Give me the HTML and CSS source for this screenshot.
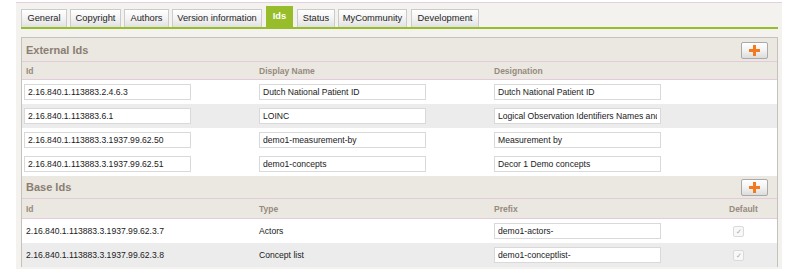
FILE: index.html
```html
<!DOCTYPE html>
<html>
<head>
<meta charset="utf-8">
<link rel="stylesheet" href="styles.css">
</head>
<body>
<div class="page">
  <div class="tabs">
    <div class="tab t-general">General</div>
    <div class="tab t-copy">Copyright</div>
    <div class="tab t-authors">Authors</div>
    <div class="tab t-version">Version information</div>
    <div class="tab active t-ids">Ids</div>
    <div class="tab t-status">Status</div>
    <div class="tab t-comm">MyCommunity</div>
    <div class="tab t-dev">Development</div>
  </div>
  <div class="panel">
    <div class="section-head">
      <span class="section-title">External Ids</span>
      <button class="add-btn"><span class="plus"></span></button>
    </div>
    <div class="row colhead">
      <div class="cell first">Id</div>
      <div class="cell">Display Name</div>
      <div class="cell">Designation</div>
      <div class="cell"></div>
    </div>
    <div class="row">
      <div class="cell first"><input class="field" value="2.16.840.1.113883.2.4.6.3"></div>
      <div class="cell"><input class="field" value="Dutch National Patient ID"></div>
      <div class="cell"><input class="field" value="Dutch National Patient ID"></div>
      <div class="cell"></div>
    </div>
    <div class="row alt">
      <div class="cell first"><input class="field" value="2.16.840.1.113883.6.1"></div>
      <div class="cell"><input class="field" value="LOINC"></div>
      <div class="cell"><input class="field" value="Logical Observation Identifiers Names and Codes"></div>
      <div class="cell"></div>
    </div>
    <div class="row">
      <div class="cell first"><input class="field" value="2.16.840.1.113883.3.1937.99.62.50"></div>
      <div class="cell"><input class="field" value="demo1-measurement-by"></div>
      <div class="cell"><input class="field" value="Measurement by"></div>
      <div class="cell"></div>
    </div>
    <div class="row">
      <div class="cell first"><input class="field" value="2.16.840.1.113883.3.1937.99.62.51"></div>
      <div class="cell"><input class="field" value="demo1-concepts"></div>
      <div class="cell"><input class="field" value="Decor 1 Demo concepts"></div>
      <div class="cell"></div>
    </div>
    <div class="section-head base">
      <span class="section-title">Base Ids</span>
      <button class="add-btn"><span class="plus"></span></button>
    </div>
    <div class="row colhead tall">
      <div class="cell first">Id</div>
      <div class="cell">Type</div>
      <div class="cell">Prefix</div>
      <div class="cell">Default</div>
    </div>
    <div class="row">
      <div class="cell first text">2.16.840.1.113883.3.1937.99.62.3.7</div>
      <div class="cell text">Actors</div>
      <div class="cell"><input class="field" value="demo1-actors-"></div>
      <div class="cell"><span class="check">&#10003;</span></div>
    </div>
    <div class="row alt">
      <div class="cell first text">2.16.840.1.113883.3.1937.99.62.3.8</div>
      <div class="cell text">Concept list</div>
      <div class="cell"><input class="field" value="demo1-conceptlist-"></div>
      <div class="cell"><span class="check">&#10003;</span></div>
    </div>
  </div>
</div>
</body>
</html>
```
FILE: styles.css
```css
html, body {
  margin: 0;
  padding: 0;
  background: #ffffff;
  height: 100%;
  overflow: hidden;
}
body {
  font-family: "Liberation Sans", Arial, sans-serif;
  color: #1a1a1a;
}
.page {
  margin: 2px 0 0 16px;
  width: 766px;
  height: 300px;
  background: #f4f2ee;
  border-top: 1px solid #e6cfe0;
  padding: 4px 0 0 5px;
  box-sizing: border-box;
}
.tabs {
  display: flex;
  align-items: flex-end;
  gap: 3px;
  width: 757px;
  height: 20px;
  border-bottom: 2px solid #98bd2b;
}
.tab {
  height: 18px;
  box-sizing: border-box;
  border: 1px solid #cbcbcb;
  border-bottom: none;
  background: linear-gradient(#ffffff, #f3f3f3 50%, #e1e1e1);
  font-size: 9.3px;
  line-height: 17px;
  text-align: center;
  color: #1e1e1e;
}
.t-general { width: 46px; }
.t-copy { width: 51px; }
.t-authors { width: 45px; }
.t-version { width: 90px; }
.t-ids { width: 27px; margin-left: 1px; }
.t-status { width: 38px; margin-left: 1px; }
.t-comm { width: 69px; }
.t-dev { width: 68px; margin-left: 1px; }
.tab.active {
  height: 21px;
  background: #98bd2b;
  border-color: #98bd2b;
  color: #ffffff;
  font-weight: bold;
  line-height: 18px;
}
.panel {
  margin-top: 8px;
  width: 757px;
  border: 1px solid #c6c2bb;
  border-bottom: none;
  background: #ffffff;
  box-sizing: border-box;
}
.section-head {
  display: flex;
  align-items: center;
  justify-content: space-between;
  height: 23px;
  padding: 0 9px 0 4px;
  background: #ebe7e1;
  border-bottom: 1px solid #e3cbdb;
}
.section-head.base {
  height: 22px;
}
.section-title {
  font-size: 11px;
  font-weight: bold;
  color: #8a7e72;
}
.add-btn {
  width: 27px;
  height: 17px;
  padding: 0;
  border: 1px solid #a9a9a9;
  border-radius: 2px;
  background: linear-gradient(#ffffff, #f2f2f2 50%, #dcdcdc);
  display: flex;
  align-items: center;
  justify-content: center;
  margin-top: 1px;
}
.plus {
  width: 11px;
  height: 11px;
  background:
    linear-gradient(#f37a1f, #f37a1f) center / 11px 3px no-repeat,
    linear-gradient(#f37a1f, #f37a1f) center / 3px 11px no-repeat;
}
.row {
  display: grid;
  grid-template-columns: 235px 235px 235px 1fr;
  height: 24px;
  align-items: center;
  background: #ffffff;
}
.row.alt {
  background: #ececec;
}
.row.colhead {
  height: 17px;
  background: #ebe7e1;
  border-bottom: 1px solid #e3cbdb;
  font-size: 8.5px;
  font-weight: bold;
  color: #968b80;
}
.row.colhead.tall {
  height: 19px;
}
.colhead .cell {
  padding-left: 2px;
}
.colhead .cell.first {
  padding-left: 4px;
}
.cell {
  padding-left: 2px;
  min-width: 0;
}
.cell.text {
  font-size: 8.6px;
}
.cell.first.text {
  padding-left: 4px;
}
.field {
  display: block;
  width: 167px;
  height: 16px;
  box-sizing: border-box;
  margin: 0;
  padding: 0 3px;
  border: 1px solid #d9d9d9;
  background: #ffffff;
  font-family: "Liberation Sans", Arial, sans-serif;
  font-size: 8.6px;
  color: #1a1a1a;
  outline: none;
}
.check {
  display: block;
  margin-left: 4px;
  width: 9px;
  height: 9px;
  border: 1px solid #dadada;
  border-radius: 2px;
  background: #f8f8f8;
  font-size: 7px;
  line-height: 9px;
  text-align: center;
  color: #a8a8a8;
}
```
